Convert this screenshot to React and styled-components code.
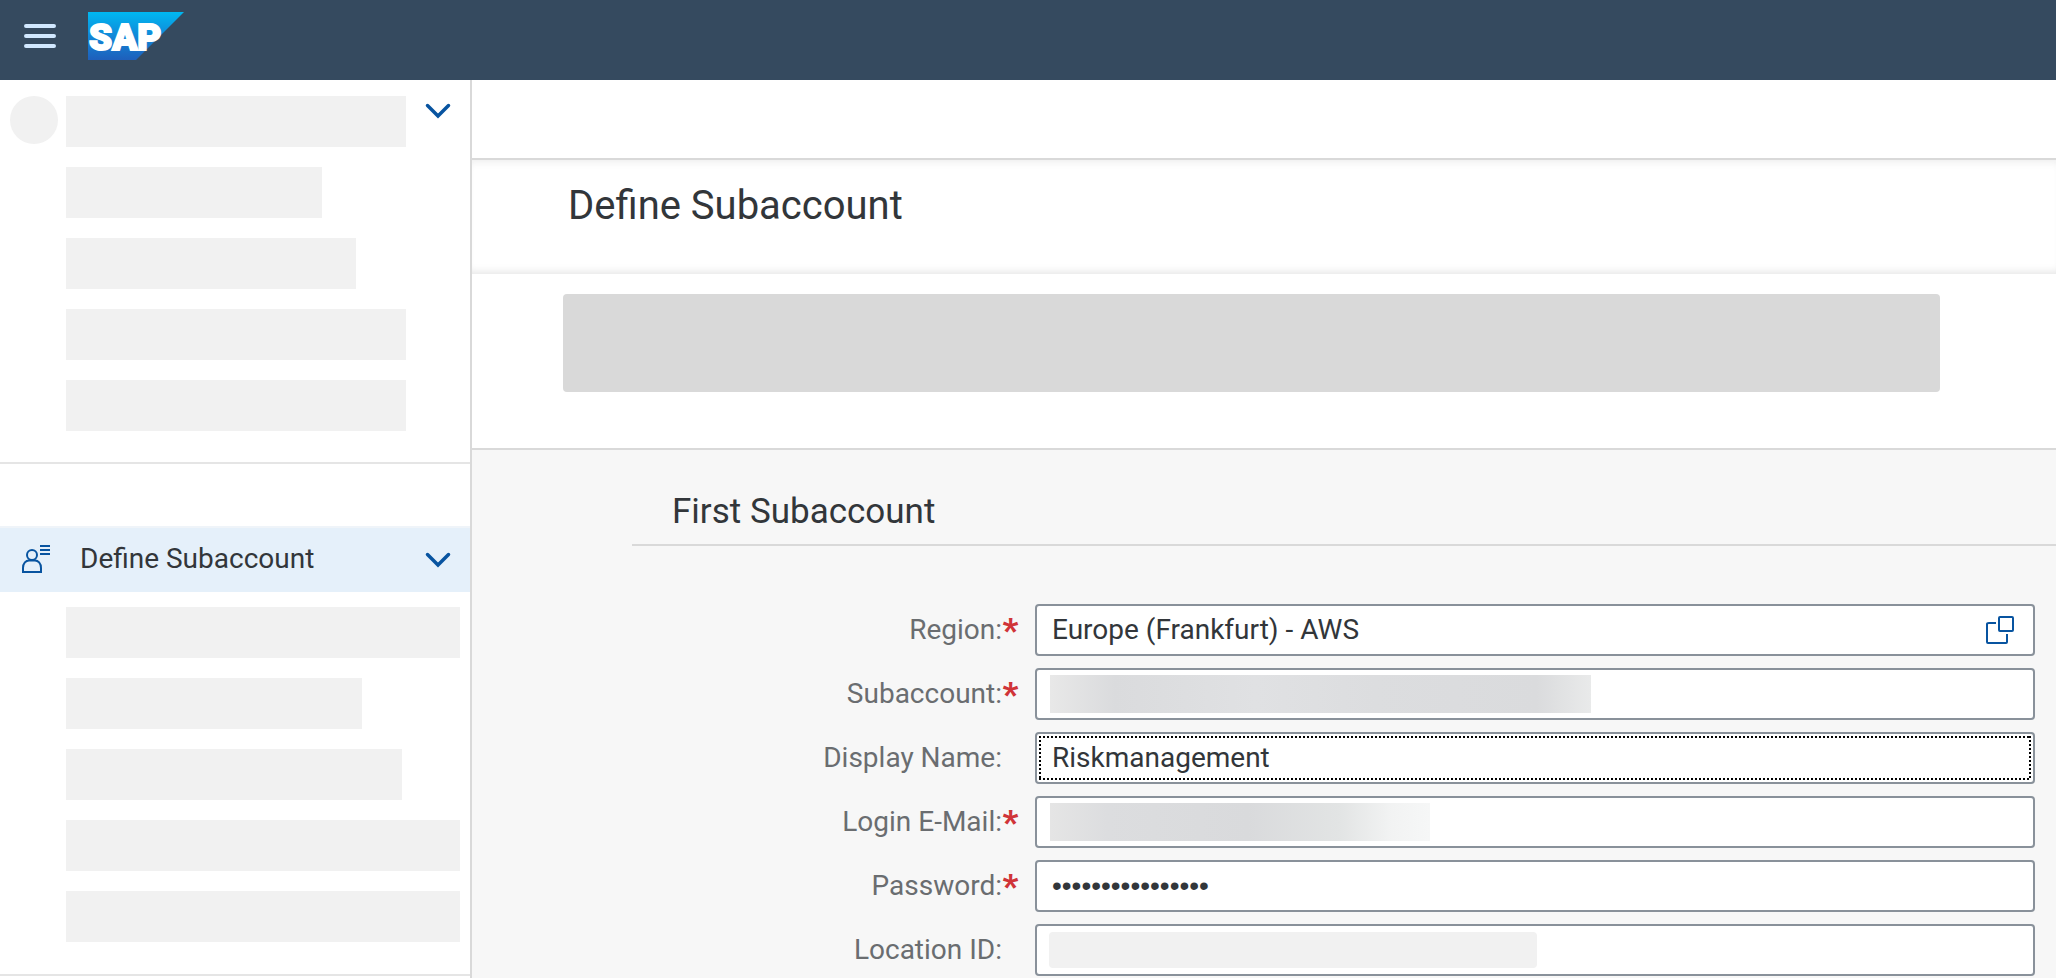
import React from "react";
import styled, { createGlobalStyle } from "styled-components";

const GlobalStyle = createGlobalStyle`
  *, *::before, *::after { box-sizing: border-box; }
  body {
    margin: 0;
    background: #fff;
    color: #32363a;
    font-family: Roboto, "Liberation Sans", sans-serif;
    font-size: 28px;
    line-height: 32px;
  }
`;

const Page = styled.div`
  display: flex;
  flex-direction: column;
  min-height: 100vh;
`;

const ShellBar = styled.header`
  display: flex;
  align-items: flex-start;
  gap: 32px;
  height: 80px;
  padding: 12px 24px;
  background: #354a5f;
`;

const IconButton = styled.button`
  display: flex;
  flex: none;
  align-items: center;
  justify-content: center;
  padding: 0;
  border: 0;
  background: none;
  color: ${(p) => p.$color || "#0854a0"};
  cursor: pointer;
`;

const MenuButton = styled(IconButton)`
  width: 32px;
  height: 48px;
`;

const Logo = styled.svg`
  display: block;
`;

const Body = styled.div`
  display: flex;
  flex: 1;
`;

const Sidebar = styled.nav`
  flex: none;
  width: 472px;
  border-right: 2px solid #d9d9d9;
`;

const Group = styled.div`
  display: flex;
  gap: 8px;
  padding: ${(p) => (p.$nested ? "15px 10px 32px 66px" : "16px 18px 31px 10px")};
  border-bottom: 2px solid #e5e5e5;
`;

const GroupChevron = styled(IconButton)`
  width: 28px;
  height: 28px;
  margin-left: auto;
`;

const Avatar = styled.div`
  flex: none;
  width: 48px;
  height: 48px;
  border-radius: 50%;
  background: #f1f1f1;
`;

const Bars = styled.div`
  display: flex;
  flex-direction: column;
  gap: 20px;
`;

const Bar = styled.div`
  width: ${(p) => p.$width}px;
  height: 51px;
  background: #f1f1f1;
`;

const ActiveItem = styled.div`
  display: flex;
  align-items: center;
  height: 66px;
  margin-top: 62px;
  padding: 0 18px 2px 20px;
  border-top: 2px solid #eff4f9;
  background: #e5f0fa;
`;

const ItemLink = styled.a`
  display: flex;
  flex: 1;
  align-items: center;
  gap: 28px;
  color: inherit;
  text-decoration: none;
`;

const Main = styled.main`
  display: flex;
  flex: 1;
  flex-direction: column;
  min-width: 0;
`;

const TopStrip = styled.div`
  height: 80px;
  border-bottom: 2px solid #d9d9d9;
`;

const TitleBand = styled.div`
  height: 114px;
  padding: 22px 96px;
  box-shadow: inset 0 8px 8px -6px #ededed, inset 0 -8px 8px -6px #e4e4e4;
`;

const Title = styled.h1`
  margin: 0;
  font-size: 40px;
  font-weight: 400;
  line-height: 48px;
`;

const Summary = styled.div`
  padding: 20px 116px 56px 91px;
  border-bottom: 2px solid #d9d9d9;
`;

const SummaryBox = styled.div`
  height: 98px;
  border-radius: 4px;
  background: #d9d9d9;
`;

const Content = styled.form`
  flex: 1;
  padding: 32px 0 0 160px;
  background: #f7f7f7;
`;

const SectionTitle = styled.h2`
  margin: 0;
  padding: 8px 40px 10px;
  border-bottom: 2px solid #d9d9d9;
  font-size: 35px;
  font-weight: 400;
  line-height: 44px;
`;

const Fields = styled.div`
  display: flex;
  flex-direction: column;
  gap: 12px;
  padding: 58px 21px 2px 0;
`;

const Row = styled.div`
  display: grid;
  grid-template-columns: 387fr 1000fr;
  align-items: center;
  gap: 16px;
`;

const Label = styled.label`
  padding-right: ${(p) => (p.$required ? 0 : 17)}px;
  color: #6a6d70;
  text-align: right;
`;

const Required = styled.span`
  display: inline-block;
  width: 17px;
  color: #d03438;
  font-size: 34px;
  font-weight: 900;
  line-height: 32px;
  vertical-align: top;
  text-align: center;
`;

const Control = styled.div`
  position: relative;
  display: flex;
  height: 52px;
  border: 2px solid #89919a;
  border-radius: 4px;
  background: #fff;
`;

const Input = styled.input`
  flex: 1;
  min-width: 0;
  padding: 0 15px;
  border: 0;
  outline: 0;
  background: none;
  color: inherit;
  font: inherit;

  &[type="password"] {
    font-family: "Liberation Sans", Arial, sans-serif;
  }
`;

const ValueHelp = styled(IconButton)`
  width: 64px;
`;

const FocusFrame = styled.span`
  position: absolute;
  inset: 2px;
  pointer-events: none;
  background:
    repeating-linear-gradient(90deg, #000 0 2px, transparent 2px 4px) top / 100% 2px no-repeat,
    repeating-linear-gradient(90deg, #000 0 2px, transparent 2px 4px) bottom / 100% 2px no-repeat,
    repeating-linear-gradient(#000 0 2px, transparent 2px 4px) left / 2px 100% no-repeat,
    repeating-linear-gradient(#000 0 2px, transparent 2px 4px) right / 2px 100% no-repeat;
`;

const Mask = styled.span`
  position: absolute;
  top: 5px;
  left: 13px;
  width: ${(p) => p.$width}px;
  max-width: 90%;
  height: 38px;
  background: ${(p) => p.$fill};
`;

const PlainMask = styled(Mask)`
  top: 6px;
  left: 12px;
  height: 36px;
  border-radius: 4px;
`;

const MenuIcon = () => (
  <svg width="32" height="24" viewBox="0 0 32 24" aria-hidden="true">
    <path d="M2 2h28M2 12h28M2 22h28" stroke="currentColor" strokeWidth="4" strokeLinecap="round" />
  </svg>
);

const SapLogo = () => (
  <Logo width="96" height="48" viewBox="0 0 96 48" role="img" aria-label="SAP">
    <defs>
      <linearGradient id="sapBlue" x1="0" y1="0" x2="0" y2="1">
        <stop offset="0" stopColor="#00b8f1" />
        <stop offset="0.5" stopColor="#1188d8" />
        <stop offset="1" stopColor="#1e5fbb" />
      </linearGradient>
    </defs>
    <path d="M0 0h96L48 48H0z" fill="url(#sapBlue)" />
    <text
      x="1"
      y="38"
      fill="#fff"
      stroke="#fff"
      strokeWidth="2"
      fontFamily="Roboto, sans-serif"
      fontSize="37"
      fontWeight="900"
    >
      SAP
    </text>
  </Logo>
);

const Chevron = () => (
  <svg width="28" height="28" viewBox="0 0 28 28" aria-hidden="true">
    <path d="M3.500 9.500L14 20l10.500-10.500" fill="none" stroke="currentColor" strokeWidth="3.500" strokeLinecap="round" />
  </svg>
);

const AccountIcon = () => (
  <svg width="32" height="32" viewBox="0 0 32 32" aria-hidden="true">
    <g fill="none" stroke="#0854a0" strokeWidth="2">
      <circle cx="12" cy="12" r="5" />
      <path d="M3 29v-4c0-5 3-7.500 6-7.500h6c3 0 6 2.500 6 7.500v4z" />
      <path d="M20 3h10M20 7h10M20 11h10" />
    </g>
  </svg>
);

const ValueHelpIcon = () => (
  <svg width="32" height="32" viewBox="0 0 32 32" aria-hidden="true">
    <g fill="none" stroke="currentColor" strokeWidth="2">
      <rect x="14" y="3" width="14" height="14" rx="1" />
      <path d="M11 9H4q-2 0-2 1v18q0 1 1 1h18q1 0 1-1v-8" />
    </g>
  </svg>
);

const topBars = [340, 256, 290, 340, 340];
const nestedBars = [394, 296, 336, 394, 394];

const subaccountFill =
  "linear-gradient(90deg, #e8e8e8 0, #dadbdd 12%, #e0e1e3 38%, #dcdddf 60%, #dadbdd 90%, #e9eaea 100%)";
const mailFill =
  "linear-gradient(90deg, #e5e5e5 0, #dcdddf 15%, #d9dadc 52%, #e2e4e4 76%, #f2f3f3 90%, #f6f7f7 100%)";

const fields = [
  { id: "region", label: "Region:", required: true, value: "Europe (Frankfurt) - AWS", help: true },
  { id: "subaccount", label: "Subaccount:", required: true, mask: <Mask $width={541} $fill={subaccountFill} /> },
  { id: "display-name", label: "Display Name:", value: "Riskmanagement", focused: true },
  { id: "email", label: "Login E-Mail:", required: true, mask: <Mask $width={380} $fill={mailFill} /> },
  { id: "password", label: "Password:", required: true, type: "password", value: "subaccountsecret" },
  { id: "location", label: "Location ID:", mask: <PlainMask $width={488} $fill="#f1f1f1" /> },
];

const Field = ({ id, label, required, type = "text", value = "", help, focused, mask }) => (
  <Row>
    <Label htmlFor={id} $required={required}>
      {label}
      {required && <Required>*</Required>}
    </Label>
    <Control>
      <Input id={id} type={type} defaultValue={value} />
      {mask}
      {focused && <FocusFrame />}
      {help && (
        <ValueHelp type="button" aria-label="Select region">
          <ValueHelpIcon />
        </ValueHelp>
      )}
    </Control>
  </Row>
);

export default function App() {
  return (
    <Page>
      <GlobalStyle />
      <ShellBar>
        <MenuButton type="button" aria-label="Menu" $color="#d1e8ff">
          <MenuIcon />
        </MenuButton>
        <SapLogo />
      </ShellBar>
      <Body>
        <Sidebar>
          <Group>
            <Avatar />
            <Bars>
              {topBars.map((width, i) => (
                <Bar key={i} $width={width} />
              ))}
            </Bars>
            <GroupChevron type="button" aria-label="Collapse group">
              <Chevron />
            </GroupChevron>
          </Group>
          <ActiveItem>
            <ItemLink href="#define-subaccount">
              <AccountIcon />
              Define Subaccount
            </ItemLink>
            <GroupChevron type="button" aria-label="Collapse Define Subaccount">
              <Chevron />
            </GroupChevron>
          </ActiveItem>
          <Group $nested>
            <Bars>
              {nestedBars.map((width, i) => (
                <Bar key={i} $width={width} />
              ))}
            </Bars>
          </Group>
        </Sidebar>
        <Main>
          <TopStrip />
          <TitleBand>
            <Title>Define Subaccount</Title>
          </TitleBand>
          <Summary>
            <SummaryBox />
          </Summary>
          <Content>
            <SectionTitle>First Subaccount</SectionTitle>
            <Fields>
              {fields.map((field) => (
                <Field key={field.id} {...field} />
              ))}
            </Fields>
          </Content>
        </Main>
      </Body>
    </Page>
  );
}
